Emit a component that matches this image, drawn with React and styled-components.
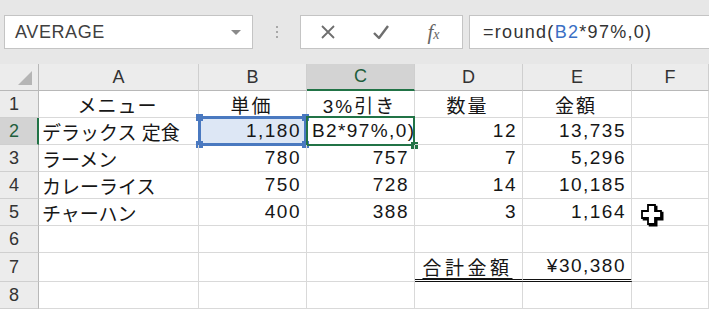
import React from "react";
import styled, { createGlobalStyle, css } from "styled-components";

const Global = createGlobalStyle`
  html, body { margin: 0; padding: 0; background: #ffffff; }
  body { font-family: "Liberation Sans", "Noto Sans CJK JP", sans-serif; overflow: hidden; }
`;

const Page = styled.div`
  width: 709px;
  height: 311px;
  overflow: hidden;
  background: #ffffff;
`;

const Toolbar = styled.div`
  height: 64px;
  box-sizing: border-box;
  padding: 15px 0 15px 4px;
  background: #e7e7e7;
  display: flex;
  align-items: stretch;
`;

const NameBox = styled.div`
  width: 249px;
  box-sizing: border-box;
  background: #ffffff;
  border: 1px solid #c4c4c4;
  display: flex;
  align-items: center;
  justify-content: space-between;
  padding: 0 11px 0 10px;
  font-size: 18px;
  letter-spacing: 0.6px;
  color: #404040;
`;

const Caret = styled.span`
  width: 0;
  height: 0;
  border-left: 5px solid transparent;
  border-right: 5px solid transparent;
  border-top: 5px solid #8a8a8a;
`;

const Grip = styled.div`
  width: 47px;
  display: flex;
  flex-direction: column;
  align-items: center;
  justify-content: center;
  gap: 3px;
  & span {
    width: 2px;
    height: 2px;
    background: #a8a8a8;
  }
`;

const ButtonBox = styled.div`
  width: 163px;
  box-sizing: border-box;
  background: #ffffff;
  border: 1px solid #c4c4c4;
  display: flex;
  align-items: center;
`;

const BarButton = styled.div`
  width: 53px;
  display: flex;
  justify-content: center;
  align-items: center;
  color: #6a6a6a;
`;

const Fx = styled.span`
  font-family: "Liberation Serif", serif;
  font-style: italic;
  font-size: 21px;
  color: #666666;
  & small { font-size: 14px; }
`;

const FormulaBox = styled.div`
  flex: 1;
  margin-left: 6px;
  box-sizing: border-box;
  background: #ffffff;
  border: 1px solid #c4c4c4;
  border-right: none;
  display: flex;
  align-items: center;
  padding-left: 13px;
  font-size: 18px;
  color: #333333;
  letter-spacing: 1.3px;
`;

const Ref = styled.span`
  color: #3a6fc4;
`;

const Grid = styled.div`
  display: grid;
  grid-template-columns: 39px 160px 108px 108px 108px 109px 1fr;
  grid-template-rows: 27px repeat(6, 27px) 29px 27px;
`;

const ColHead = styled.div`
  background: ${(p) => (p.$active ? "#d3d3d3" : "#ececec")};
  border-right: 1px solid #cfcfcf;
  border-bottom: ${(p) => (p.$active ? "2px solid #217346" : "1px solid #b8b8b8")};
  box-sizing: border-box;
  display: flex;
  align-items: center;
  justify-content: center;
  font-size: 18px;
  color: ${(p) => (p.$active ? "#1e5e3c" : "#333333")};
`;

const Corner = styled.div`
  background: #ececec;
  border-right: 1px solid #b8b8b8;
  border-bottom: 1px solid #b8b8b8;
  box-sizing: border-box;
  display: flex;
  align-items: flex-end;
  justify-content: flex-end;
  padding: 0 6px 5px 0;
`;

const CornerTri = styled.span`
  width: 0;
  height: 0;
  border-left: 14px solid transparent;
  border-bottom: 14px solid #b5b5b5;
`;

const RowHead = styled.div`
  background: ${(p) => (p.$active ? "#d3d3d3" : "#ececec")};
  border-right: ${(p) => (p.$active ? "2px solid #217346" : "1px solid #b8b8b8")};
  border-bottom: 1px solid #cfcfcf;
  box-sizing: border-box;
  display: flex;
  align-items: center;
  padding-left: 9px;
  font-size: 18px;
  color: ${(p) => (p.$active ? "#1e5e3c" : "#333333")};
`;

const Cell = styled.div`
  position: relative;
  box-sizing: border-box;
  border-right: 1px solid #d9d9d9;
  border-bottom: ${(p) => (p.$double ? "3px double #111111" : "1px solid #d9d9d9")};
  display: flex;
  align-items: center;
  justify-content: ${(p) =>
    p.$align === "right" ? "flex-end" : p.$align === "center" ? "center" : "flex-start"};
  padding: 0 5px 0 3px;
  font-size: 19px;
  color: #161616;
  white-space: nowrap;
  ${(p) => p.$fill && css`background: ${p.$fill};`}
`;

const Num = styled.span`
  letter-spacing: 1.5px;
`;

const Under = styled.span`
  text-decoration: underline;
  text-underline-offset: 3px;
  text-decoration-thickness: 1px;
  letter-spacing: 3.5px;
`;

const Jp = styled.span`
  letter-spacing: ${(p) => p.$ls || "0px"};
`;

const RefFrame = styled.div`
  position: absolute;
  left: -1px;
  top: -2px;
  right: -1px;
  bottom: -2px;
  border: 3px solid #4a79c0;
  pointer-events: none;
`;

const Handle = styled.span`
  position: absolute;
  width: 7px;
  height: 7px;
  background: ${(p) => p.$color};
  ${(p) => (p.$x === "l" ? "left: -5px;" : "right: -5px;")}
  ${(p) => (p.$y === "t" ? "top: -5px;" : "bottom: -5px;")}
`;

const EditFrame = styled.div`
  position: absolute;
  left: -1px;
  top: -2px;
  right: -1px;
  bottom: -2px;
  border: 2px solid #217346;
  pointer-events: none;
`;

const EditText = styled.span`
  margin-left: 2px;
  letter-spacing: 1.4px;
`;

const Cursor = styled.svg`
  position: absolute;
  left: 8px;
  top: 4px;
`;

const cols = ["A", "B", "C", "D", "E", "F"];

const data = [
  ["メニュー", "単価", "3%引き", "数量", "金額"],
  ["デラックス 定食", "1,180", "", "12", "13,735"],
  ["ラーメン", "780", "757", "7", "5,296"],
  ["カレーライス", "750", "728", "14", "10,185"],
  ["チャーハン", "400", "388", "3", "1,164"],
];

function PlusCursor() {
  const pts = "6,0 13,0 13,6 19,6 19,13 13,13 13,19 6,19 6,13 0,13 0,6 6,6";
  return (
    <Cursor width="24" height="24" viewBox="-2 -2 24 24">
      <polygon points={pts} transform="translate(1.6,1.6)" fill="#000" stroke="#000" strokeWidth="1.8" />
      <polygon points={pts} fill="#fff" stroke="#000" strokeWidth="1.8" />
    </Cursor>
  );
}

export default function App() {
  const rows = [];
  data.forEach((r, i) => {
    const n = i + 1;
    rows.push(
      <RowHead key={`h${n}`} $active={n === 2}>
        {n}
      </RowHead>
    );
    r.forEach((v, j) => {
      const key = `c${n}-${j}`;
      if (n === 1) {
        rows.push(
          <Cell key={key} $align="center">
            <Jp $ls={j === 0 ? "1px" : "2px"}>{v}</Jp>
          </Cell>
        );
      } else if (j === 0) {
        rows.push(
          <Cell key={key}>
            <Jp>{v}</Jp>
          </Cell>
        );
      } else if (n === 2 && j === 1) {
        rows.push(
          <Cell key={key} $align="right" $fill="#dde7f5">
            <Num>{v}</Num>
            <RefFrame>
              <Handle $color="#4a79c0" $x="l" $y="t" />
              <Handle $color="#4a79c0" $x="r" $y="t" />
              <Handle $color="#4a79c0" $x="l" $y="b" />
              <Handle $color="#4a79c0" $x="r" $y="b" />
            </RefFrame>
          </Cell>
        );
      } else if (n === 2 && j === 2) {
        rows.push(
          <Cell key={key}>
            <EditText>B2*97%,0)</EditText>
            <EditFrame>
              <Handle $color="#217346" $x="r" $y="b" />
            </EditFrame>
          </Cell>
        );
      } else {
        rows.push(
          <Cell key={key} $align="right">
            <Num>{v}</Num>
          </Cell>
        );
      }
    });
    rows.push(
      <Cell key={`f${n}`}>{n === 5 ? <PlusCursor /> : null}</Cell>
    );
  });

  [6, 7, 8].forEach((n) => {
    rows.push(
      <RowHead key={`h${n}`} $active={false}>
        {n}
      </RowHead>
    );
    for (let j = 0; j < 6; j++) {
      const key = `c${n}-${j}`;
      if (n === 7 && j === 3) {
        rows.push(
          <Cell key={key} $align="center" $double>
            <Under>合計金額</Under>
          </Cell>
        );
      } else if (n === 7 && j === 4) {
        rows.push(
          <Cell key={key} $align="right" $double>
            <Num>¥30,380</Num>
          </Cell>
        );
      } else {
        rows.push(<Cell key={key} />);
      }
    }
  });

  return (
    <Page>
      <Global />
      <Toolbar>
        <NameBox>
          AVERAGE
          <Caret />
        </NameBox>
        <Grip>
          <span />
          <span />
          <span />
        </Grip>
        <ButtonBox>
          <BarButton>
            <svg width="16" height="16" viewBox="0 0 16 16">
              <path d="M2 2 L14 14 M14 2 L2 14" stroke="#6e6e6e" strokeWidth="1.8" fill="none" />
            </svg>
          </BarButton>
          <BarButton>
            <svg width="18" height="16" viewBox="0 0 18 16">
              <path d="M2 9 L7 14 L16 2" stroke="#6e6e6e" strokeWidth="2.4" fill="none" strokeLinejoin="round" />
            </svg>
          </BarButton>
          <BarButton>
            <Fx>
              f<small>x</small>
            </Fx>
          </BarButton>
        </ButtonBox>
        <FormulaBox>
          =round(<Ref>B2</Ref>*97%,0)
        </FormulaBox>
      </Toolbar>
      <Grid>
        <Corner>
          <CornerTri />
        </Corner>
        {cols.map((c) => (
          <ColHead key={c} $active={c === "C"}>
            {c}
          </ColHead>
        ))}
        {rows}
      </Grid>
    </Page>
  );
}
